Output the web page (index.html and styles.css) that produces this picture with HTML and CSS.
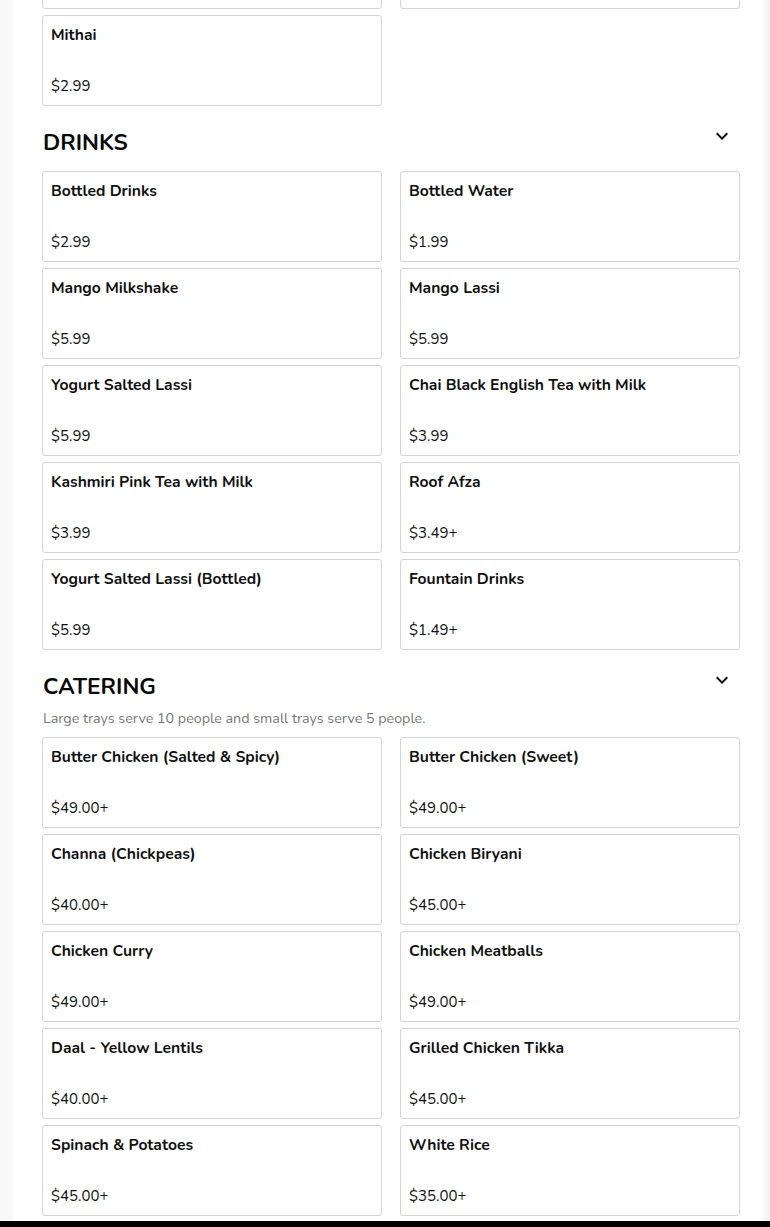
FILE: index.html
```html
<!DOCTYPE html>
<html lang="en">
<head>
<meta charset="utf-8">
<title>Menu</title>
<link rel="stylesheet" href="styles.css">
</head>
<body>
<div class="page">
  <div class="side-left"></div>
  <main class="main">
    <div class="menu">
      <section class="section">
        <div class="grid">
          <div class="card"></div>
          <div class="card"></div>
          <div class="card"><div class="name">Mithai</div><div class="price">$2.99</div></div>
        </div>
      </section>

      <section class="section">
        <div class="head">
          <h2 class="title">DRINKS</h2>
          <svg class="chev" viewBox="0 0 24 24" width="24" height="24"><path d="M16.59 8.59L12 13.17 7.41 8.59 6 10l6 6 6-6z"/></svg>
        </div>
        <div class="grid">
          <div class="card"><div class="name">Bottled Drinks</div><div class="price">$2.99</div></div>
          <div class="card"><div class="name">Bottled Water</div><div class="price">$1.99</div></div>
          <div class="card"><div class="name">Mango Milkshake</div><div class="price">$5.99</div></div>
          <div class="card"><div class="name">Mango Lassi</div><div class="price">$5.99</div></div>
          <div class="card"><div class="name">Yogurt Salted Lassi</div><div class="price">$5.99</div></div>
          <div class="card"><div class="name">Chai Black English Tea with Milk</div><div class="price">$3.99</div></div>
          <div class="card"><div class="name">Kashmiri Pink Tea with Milk</div><div class="price">$3.99</div></div>
          <div class="card"><div class="name">Roof Afza</div><div class="price">$3.49+</div></div>
          <div class="card"><div class="name">Yogurt Salted Lassi (Bottled)</div><div class="price">$5.99</div></div>
          <div class="card"><div class="name">Fountain Drinks</div><div class="price">$1.49+</div></div>
        </div>
      </section>

      <section class="section">
        <div class="head head-sub">
          <h2 class="title">CATERING</h2>
          <svg class="chev" viewBox="0 0 24 24" width="24" height="24"><path d="M16.59 8.59L12 13.17 7.41 8.59 6 10l6 6 6-6z"/></svg>
        </div>
        <p class="desc">Large trays serve 10 people and small trays serve 5 people.</p>
        <div class="grid">
          <div class="card"><div class="name">Butter Chicken (Salted &amp; Spicy)</div><div class="price">$49.00+</div></div>
          <div class="card"><div class="name">Butter Chicken (Sweet)</div><div class="price">$49.00+</div></div>
          <div class="card"><div class="name">Channa (Chickpeas)</div><div class="price">$40.00+</div></div>
          <div class="card"><div class="name">Chicken Biryani</div><div class="price">$45.00+</div></div>
          <div class="card"><div class="name">Chicken Curry</div><div class="price">$49.00+</div></div>
          <div class="card"><div class="name">Chicken Meatballs</div><div class="price">$49.00+</div></div>
          <div class="card"><div class="name">Daal - Yellow Lentils</div><div class="price">$40.00+</div></div>
          <div class="card"><div class="name">Grilled Chicken Tikka</div><div class="price">$45.00+</div></div>
          <div class="card"><div class="name">Spinach &amp; Potatoes</div><div class="price">$45.00+</div></div>
          <div class="card"><div class="name">White Rice</div><div class="price">$35.00+</div></div>
        </div>
      </section>
    </div>
  </main>
  <div class="side-right"></div>
</div>
<div class="bottom-bar"></div>
</body>
</html>
```

FILE: styles.css
```css
html, body {
  margin: 0;
  padding: 0;
}
body {
  background: #f8f8f8;
  font-family: "Nunito", "Lato", "Noto Sans", sans-serif;
  color: #000;
  overflow: hidden;
}
.page {
  display: flex;
  min-height: 1227px;
}
.side-left {
  width: 13px;
  flex: none;
  background: #f8f8f8;
}
.main {
  flex: 1;
  background: #fff;
  padding: 0 20px 0 29px;
}
.side-right {
  width: 10px;
  flex: none;
  background: linear-gradient(to right, #ffffff, #f1f1f1);
}
.menu {
  margin-top: -82px;
}
.section {
  margin-bottom: 20px;
}
.head {
  display: flex;
  justify-content: space-between;
  align-items: flex-start;
  height: 32px;
  margin-bottom: 13px;
}
.head-sub {
  margin-bottom: 7px;
}
.title {
  margin: 0;
  padding: 1px 0 0 1px;
  font-size: 22.6px;
  line-height: 31px;
  font-weight: 700;
  color: #0a0a0a;
}
.chev {
  margin-top: -2px;
  margin-right: 6px;
  fill: #111;
}
.desc {
  margin: 0 0 8px 1px;
  font-size: 14.3px;
  line-height: 20px;
  color: #777;
}
.grid {
  display: grid;
  grid-template-columns: 1fr 1fr;
  column-gap: 18px;
  row-gap: 6px;
}
.card {
  box-sizing: border-box;
  height: 91px;
  border: 1px solid #d3d3d3;
  border-radius: 3px;
  padding: 9px 8px 9px;
  display: flex;
  flex-direction: column;
  justify-content: space-between;
}
.name {
  font-size: 15.7px;
  line-height: 20px;
  font-weight: 700;
  color: #111;
}
.price {
  font-size: 15px;
  line-height: 20px;
  font-weight: 400;
  color: #111;
}
.bottom-bar {
  position: fixed;
  left: 0;
  right: 0;
  bottom: 0;
  height: 6px;
  background: #000;
}
```
